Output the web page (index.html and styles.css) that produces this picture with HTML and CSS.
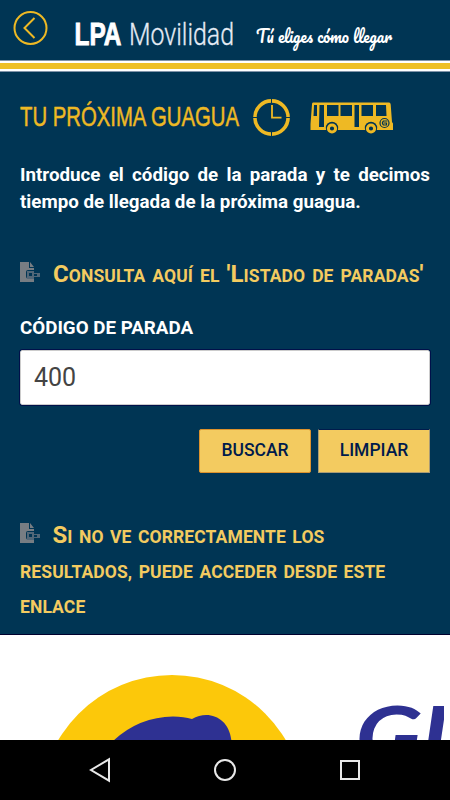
FILE: index.html
```html
<!DOCTYPE html>
<html lang="es">
<head>
  <meta charset="UTF-8">
  <meta name="viewport" content="width=device-width, initial-scale=1.0">
  <title>LPA Movilidad</title>
  <link rel="stylesheet" href="styles.css">
</head>
<body>
  <header class="header">
    <svg class="back-icon" width="36" height="36" viewBox="0 0 36 36">
      <circle cx="18.500" cy="18" r="16"/>
      <path d="M22.500 8L12.500 18L22.500 28"/>
    </svg>
    <svg class="brand" width="380" height="60" viewBox="0 0 380 60">
      <text class="brand-bold" x="24.500" y="45" textLength="47" lengthAdjust="spacingAndGlyphs">LPA</text>
      <text class="brand-light" x="79" y="45" textLength="105" lengthAdjust="spacingAndGlyphs">Movilidad</text>
      <text class="slogan" x="206" y="43" textLength="136" lengthAdjust="spacingAndGlyphs">Tú eliges cómo llegar</text>
    </svg>
  </header>
  <div class="stripe"></div>

  <main class="content">
    <div class="title">
      <svg width="230" height="40" viewBox="0 0 230 40">
        <text class="title-text" x="0" y="29" textLength="219" lengthAdjust="spacingAndGlyphs">TU PRÓXIMA GUAGUA</text>
      </svg>
      <svg width="40" height="40" viewBox="0 0 40 40">
        <circle class="clock-ring" cx="21.500" cy="20.500" r="16.600"/>
        <path class="clock-gap" d="M21.500 1v6M21.500 34v6M2 20.500h6M35 20.500h6"/>
        <path class="clock-hands" d="M22 8v12.700h9.500"/>
      </svg>
      <svg class="bus" width="86" height="40" viewBox="0 0 86 40">
        <path class="bus-body" d="M4 5.500h76q1.500 0 1.700 2L83 25l1 1.500V33H1.500v-6L3 7.500q0-2 1-2z"/>
        <path class="bus-glass" d="M5 8h3v11H4.500zM10.500 8H15v22h-5zM18 8h11.500v11H18zM31.500 8h11.500v11H31.500zM45.500 8H50v22h-4.500zM52.500 8H64v11H52.500zM67 8h10l.5 11H67z"/>
        <g class="bus-wheel">
          <circle cx="23" cy="31" r="6.200"/>
          <circle cx="62" cy="31" r="6.200"/>
        </g>
        <g class="bus-hub">
          <circle cx="23" cy="31.500" r="3.600"/>
          <circle cx="62" cy="31.500" r="3.600"/>
        </g>
        <circle class="bus-badge" cx="75.500" cy="26" r="4.500"/>
        <path class="bus-badge" d="M78.500 24h-4q-2.200 2 0 4h3v-2h-3"/>
      </svg>
    </div>

    <p class="intro">Introduce el código de la parada y te decimos tiempo de llegada de la próxima guagua.</p>

    <p class="link-line link-list">
      <svg class="doc-icon" width="20" height="20" viewBox="0 0 20 20">
        <path d="M0 0h9v6h5v2H8q-2 0-2 2v4q0 3 3 3h5v3H0zM10 0l4 5h-4z"/>
        <path class="doc-tag" d="M7 9h7v2h6v4h-6v2H7zM9 11v3h3v-3zM14 12v2h3v-2z"/>
      </svg>
      <a><span class="cap">C</span>onsulta aquí el <span class="cap">'L</span>istado de paradas<span class="cap">'</span></a>
    </p>

    <form class="stop-form">
      <label for="stopCode">CÓDIGO DE PARADA</label>
      <input type="text" id="stopCode" value="400">
      <div class="buttons">
        <button type="button" class="active">BUSCAR</button>
        <button type="button">LIMPIAR</button>
      </div>
    </form>

    <p class="link-line link-help">
      <svg class="doc-icon" width="20" height="20" viewBox="0 0 20 20">
        <path d="M0 0h9v6h5v2H8q-2 0-2 2v4q0 3 3 3h5v3H0zM10 0l4 5h-4z"/>
        <path class="doc-tag" d="M7 9h7v2h6v4h-6v2H7zM9 11v3h3v-3zM14 12v2h3v-2z"/>
      </svg>
      <a><span class="cap">S</span>i no ve correctamente los resultados, puede acceder desde este enlace</a>
    </p>
  </main>

  <section class="company">
    <svg width="444" height="105" viewBox="0 0 444 105">
      <circle class="logo-disc" cx="172" cy="172" r="132"/>
      <path class="logo-shape" d="M112 107Q138 82 173 81.500Q184 81.500 192 84C209 74 230 83 231.500 107z"/>
      <text class="logo-text" x="355.500" y="129" textLength="134" lengthAdjust="spacingAndGlyphs">GU</text>
    </svg>
  </section>

  <nav class="nav-bar">
    <svg width="24" height="26" viewBox="0 0 24 26"><path d="M21 2.300v21.400L3 13z"/></svg>
    <svg width="24" height="26" viewBox="0 0 24 26"><circle cx="12" cy="13" r="10"/></svg>
    <svg width="24" height="26" viewBox="0 0 24 26"><rect x="3" y="4" width="18" height="18"/></svg>
  </nav>
</body>
</html>
```

FILE: styles.css
```css
:root {
  --navy: #003554;
  --gold: #eeb924;
  --sand: #f3cb60;
  --ink: #001b4c;
  --logo-blue: #2e3192;
}

* {
  margin: 0;
  padding: 0;
  box-sizing: border-box;
}

body {
  height: 800px;
  display: flex;
  flex-direction: column;
  overflow: hidden;
  background: white;
  font-family: Roboto, sans-serif;
}

svg {
  display: block;
  fill: none;
  flex-shrink: 0;
}

.header {
  height: 60px;
  display: flex;
  background: var(--navy);
}

.back-icon {
  margin: 10px 2px 0 12px;
  stroke: var(--gold);
  stroke-width: 2;
}

.brand {
  fill: white;
}

.brand-bold {
  font: bold 31px "Liberation Sans Narrow", "Liberation Sans", sans-serif;
  stroke: white;
  stroke-width: 0.9px;
}

.brand-light {
  font: 300 31px Roboto, sans-serif;
  fill: #e5ebf4;
  stroke: #e5ebf4;
  stroke-width: 0.3px;
}

.slogan {
  font: 17px Pacifico, "Kaushan Script", "Brush Script MT", cursive;
}

.stripe {
  height: 12px;
  background: linear-gradient(#8094a9 1px, white 1px 3px, #eec027 3px 9px, white 9px 11px, #8094a9 11px);
}

.content {
  height: 563px;
  padding: 25px 20px 0;
  background: var(--navy);
  border-bottom: 1px solid #00002e;
}

.title {
  display: flex;
}

.title svg {
  overflow: visible;
}

.title-text {
  font: 28px "Liberation Sans Narrow", "Liberation Sans", sans-serif;
  fill: var(--gold);
  stroke: var(--gold);
  stroke-width: 0.5px;
}

.clock-ring {
  stroke: var(--gold);
  stroke-width: 3.6;
}

.clock-gap {
  stroke: var(--navy);
}

.clock-hands {
  stroke: var(--gold);
  stroke-width: 1.8;
}

.bus {
  margin-left: 19px;
}

.bus-body {
  fill: var(--gold);
}

.bus-glass,
.bus-wheel {
  fill: var(--navy);
}

.bus-hub {
  stroke: var(--gold);
  stroke-width: 3;
}

.bus-badge {
  stroke: var(--navy);
  stroke-width: 1.2;
}

.intro {
  margin-top: 25px;
  color: white;
  font-size: 18.75px;
  font-weight: bold;
  line-height: 27px;
  text-align: justify;
}

.link-line {
  color: var(--sand);
  font-size: 17.5px;
  font-weight: bold;
  line-height: 35px;
  text-transform: uppercase;
  letter-spacing: 0.1px;
  word-spacing: 2px;
}

.link-line .cap {
  font-size: 24px;
  line-height: 1;
}

.link-list {
  margin-top: 43px;
  word-spacing: 2.5px;
}

.doc-icon {
  display: inline-block;
  margin-right: 6px;
  fill: #777d83;
  vertical-align: 0;
}

.doc-tag {
  fill: #526778;
  fill-rule: evenodd;
}

.stop-form label {
  display: block;
  margin-top: 21px;
  color: white;
  font-size: 18.75px;
  font-weight: bold;
  line-height: 27px;
}

.stop-form input {
  display: block;
  width: 100%;
  height: 55px;
  margin-top: 8px;
  padding: 0 13px 1px;
  border: 1px solid #ccc;
  border-radius: 2px;
  background: white;
  color: #444;
  font: 25px Roboto, sans-serif;
  outline: 1px solid #00104a;
}

.buttons {
  display: flex;
  justify-content: flex-end;
  gap: 7px;
  margin-top: 24px;
}

button {
  width: 112px;
  height: 44px;
  padding-bottom: 3px;
  border: 1px solid #a99b75;
  border-top-color: var(--ink);
  background: var(--sand);
  color: var(--ink);
  font: 500 17.5px Roboto, sans-serif;
}

button.active {
  border-color: #dd922d;
  border-radius: 2px;
}

.link-help {
  margin-top: 47px;
}

.company {
  height: 105px;
}

.logo-disc {
  fill: #fcc80a;
}

.logo-shape {
  fill: var(--logo-blue);
}

.logo-text {
  font: italic bold 80px Lato, sans-serif;
  fill: var(--logo-blue);
}

.nav-bar {
  height: 60px;
  display: flex;
  justify-content: center;
  align-items: center;
  gap: 101px;
  background: black;
  stroke: #e8e8e8;
  stroke-width: 2;
}
```
